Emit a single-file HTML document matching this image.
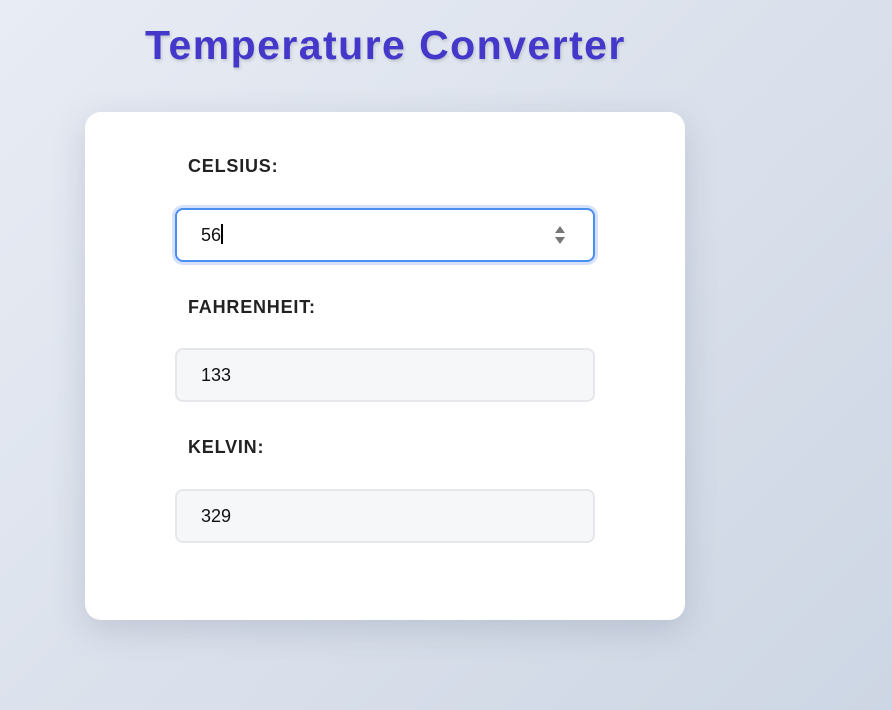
<!DOCTYPE html>
<html><head><style>
*{box-sizing:border-box;margin:0;padding:0}
body{width:892px;height:710px;overflow:hidden;background:linear-gradient(135deg,#e8ecf4 0%,#dbe1ec 50%,#cdd6e4 100%);font-family:"Liberation Sans",sans-serif;position:relative}
h1{position:absolute;left:145px;top:22px;font-size:41px;font-weight:bold;color:#4338ca;text-shadow:1px 2px 3px rgba(0,0,0,0.15);letter-spacing:1.45px;white-space:nowrap}
.card{position:absolute;left:85px;top:112px;width:600px;height:508px;background:#fff;border-radius:16px;box-shadow:0 10px 34px rgba(60,70,100,0.18)}
.lbl{position:absolute;left:103px;font-size:18px;font-weight:bold;color:#222;letter-spacing:0.8px}
.in{position:absolute;left:90px;width:420px;height:54px;border:2px solid #e5e7eb;border-radius:8px;background:#f6f7f9;font-size:18px;padding-left:24px;line-height:50px;color:#111}
.focus{background:#fff;border-color:#4a8ef0;box-shadow:0 0 0 3px #d6e2fc}
.caret{display:inline-block;width:2px;height:20px;background:#000;vertical-align:-3px}
.spin{position:absolute;right:27px;top:14px;width:12px;height:22px}
</style></head><body>
<h1>Temperature Converter</h1>
<div class="card">
<div class="lbl" style="top:44px">CELSIUS:</div>
<div class="in focus" style="top:96px">56<span class="caret"></span>
<svg class="spin" viewBox="0 0 12 22"><path d="M6 2 L11 9 L1 9Z M1 13 L11 13 L6 20Z" fill="#777"/></svg></div>
<div class="lbl" style="top:185px">FAHRENHEIT:</div>
<div class="in" style="top:236px">133</div>
<div class="lbl" style="top:325px">KELVIN:</div>
<div class="in" style="top:377px">329</div>
</div>
</body></html>
